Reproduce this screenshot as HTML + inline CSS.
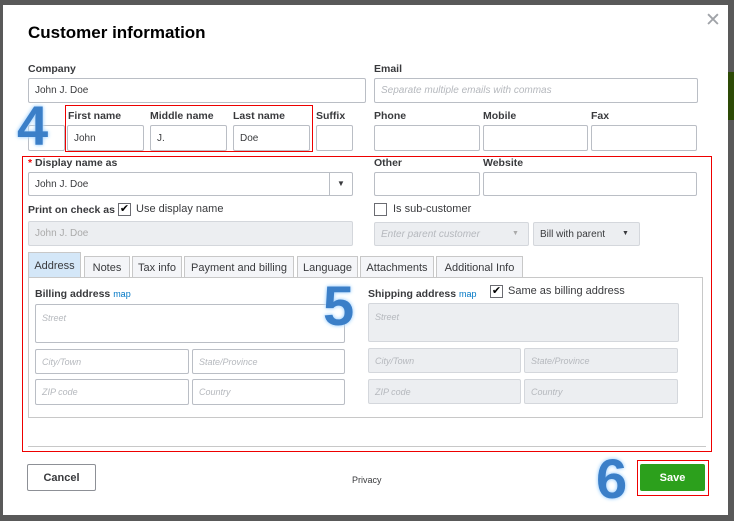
<!DOCTYPE html>
<html><head><meta charset="utf-8"><style>
*{box-sizing:border-box;margin:0;padding:0}
body{width:734px;height:521px;background:#595959;font-family:"Liberation Sans",sans-serif;position:relative;overflow:hidden;color:#393a3d}
.a{position:absolute}
.modal{left:3px;top:5px;width:725px;height:510px;background:#fff}
.lbl{font-size:10.5px;font-weight:bold;color:#393a3d}
.in{border:1px solid #babec5;background:#fff;border-radius:2px;font-size:10px;padding-left:6px;display:flex;align-items:center;color:#393a3d}
.g{background:#eceef1;border-color:#d4d7dc;color:#aaa}
.ph{color:#b5b8bd;font-style:italic}
.red{border:1px solid #e00}
.cb{width:13px;height:13px;border:1px solid #6b6c72;background:#fff;font-size:11px;line-height:11px;text-align:center;color:#000}
.tab{top:256px;height:22px;border:1px solid #c8c8c8;border-bottom:none;background:#f4f5f8;font-size:11px;display:flex;align-items:center;justify-content:center;color:#393a3d}
.big{font-weight:bold;color:#3b7fc8;text-shadow:0 0 3px #a8d4ff,0 0 5px #bfe2ff;font-family:"Liberation Sans",sans-serif;font-size:56px;line-height:1}
.map{color:#0077c5;font-size:9px;font-weight:normal}
</style></head><body>
<div class="a" style="left:728px;top:72px;width:6px;height:48px;background:#2d4a06"></div>
<div class="a modal"></div>
<div class="a" style="left:705px;top:9px;font-size:19px;color:#a0a3a8">✕</div>
<div class="a" style="left:28px;top:23px;font-size:17px;font-weight:bold;color:#000">Customer information</div>

<div class="a lbl" style="left:28px;top:63px">Company</div>
<div class="a in" style="left:28px;top:78px;width:338px;height:25px">John J. Doe</div>
<div class="a lbl" style="left:374px;top:63px">Email</div>
<div class="a in ph" style="left:374px;top:78px;width:324px;height:25px">Separate multiple emails with commas</div>

<div class="a in" style="left:28px;top:125px;width:37px;height:26px"></div>
<div class="a red" style="left:65px;top:105px;width:248px;height:47px"></div>
<div class="a lbl" style="left:68px;top:110px">First name</div>
<div class="a lbl" style="left:150px;top:110px">Middle name</div>
<div class="a lbl" style="left:233px;top:110px">Last name</div>
<div class="a lbl" style="left:316px;top:110px">Suffix</div>
<div class="a in" style="left:67px;top:125px;width:77px;height:26px">John</div>
<div class="a in" style="left:150px;top:125px;width:77px;height:26px">J.</div>
<div class="a in" style="left:233px;top:125px;width:77px;height:26px">Doe</div>
<div class="a in" style="left:316px;top:125px;width:37px;height:26px"></div>
<div class="a lbl" style="left:374px;top:110px">Phone</div>
<div class="a lbl" style="left:483px;top:110px">Mobile</div>
<div class="a lbl" style="left:591px;top:110px">Fax</div>
<div class="a in" style="left:374px;top:125px;width:106px;height:26px"></div>
<div class="a in" style="left:483px;top:125px;width:105px;height:26px"></div>
<div class="a in" style="left:591px;top:125px;width:106px;height:26px"></div>
<div class="a big" style="left:17px;top:98px">4</div>

<div class="a red" style="left:22px;top:156px;width:690px;height:296px"></div>
<div class="a lbl" style="left:28px;top:157px"><span style="color:#e00">*</span> Display name as</div>
<div class="a in" style="left:28px;top:172px;width:325px;height:24px">John J. Doe</div>
<div class="a" style="left:329px;top:173px;width:1px;height:22px;background:#babec5"></div>
<div class="a" style="left:337px;top:179px;font-size:8px">▼</div>
<div class="a lbl" style="left:374px;top:157px">Other</div>
<div class="a lbl" style="left:483px;top:157px">Website</div>
<div class="a in" style="left:374px;top:172px;width:106px;height:24px"></div>
<div class="a in" style="left:483px;top:172px;width:214px;height:24px"></div>
<div class="a lbl" style="left:28px;top:204px">Print on check as</div>
<div class="a cb" style="left:118px;top:203px">✔</div>
<div class="a" style="left:136px;top:203px;font-size:11px">Use display name</div>
<div class="a in g" style="left:28px;top:221px;width:325px;height:25px">John J. Doe</div>
<div class="a cb" style="left:374px;top:203px"></div>
<div class="a" style="left:393px;top:203px;font-size:11px">Is sub-customer</div>
<div class="a in g ph" style="left:374px;top:222px;width:155px;height:24px">Enter parent customer</div>
<div class="a" style="left:512px;top:230px;font-size:7px;color:#aaa">▼</div>
<div class="a in g" style="left:533px;top:222px;width:107px;height:24px;color:#393a3d">Bill with parent</div>
<div class="a" style="left:622px;top:230px;font-size:7px">▼</div>

<div class="a tab" style="left:28px;width:53px;background:#d4e7f8;height:26px;top:252px">Address</div>
<div class="a tab" style="left:84px;width:46px">Notes</div>
<div class="a tab" style="left:132px;width:50px">Tax info</div>
<div class="a tab" style="left:184px;width:110px">Payment and billing</div>
<div class="a tab" style="left:297px;width:61px">Language</div>
<div class="a tab" style="left:360px;width:74px">Attachments</div>
<div class="a tab" style="left:436px;width:87px">Additional Info</div>
<div class="a" style="left:28px;top:277px;width:675px;height:141px;border:1px solid #c8c8c8"></div>
<div class="a lbl" style="left:35px;top:288px">Billing address <span class="map">map</span></div>
<div class="a in ph" style="left:35px;top:304px;width:310px;height:39px;align-items:flex-start;padding-top:8px;font-size:9px">Street</div>
<div class="a in ph" style="left:35px;top:349px;width:154px;height:25px;font-size:9px">City/Town</div>
<div class="a in ph" style="left:192px;top:349px;width:153px;height:25px;font-size:9px">State/Province</div>
<div class="a in ph" style="left:35px;top:379px;width:154px;height:26px;font-size:9px">ZIP code</div>
<div class="a in ph" style="left:192px;top:379px;width:153px;height:26px;font-size:9px">Country</div>
<div class="a lbl" style="left:368px;top:288px">Shipping address <span class="map">map</span></div>
<div class="a cb" style="left:490px;top:285px">✔</div>
<div class="a" style="left:508px;top:285px;font-size:11px">Same as billing address</div>
<div class="a in g ph" style="left:368px;top:303px;width:311px;height:39px;align-items:flex-start;padding-top:8px;font-size:9px">Street</div>
<div class="a in g ph" style="left:368px;top:348px;width:153px;height:25px;font-size:9px">City/Town</div>
<div class="a in g ph" style="left:524px;top:348px;width:154px;height:25px;font-size:9px">State/Province</div>
<div class="a in g ph" style="left:368px;top:379px;width:153px;height:25px;font-size:9px">ZIP code</div>
<div class="a in g ph" style="left:524px;top:379px;width:154px;height:25px;font-size:9px">Country</div>
<div class="a big" style="left:323px;top:278px">5</div>
<div class="a" style="left:28px;top:446px;width:678px;height:1px;background:#c8c8c8"></div>

<div class="a" style="left:27px;top:464px;width:69px;height:27px;border:1px solid #8d9096;border-radius:2px;font-size:11px;font-weight:bold;display:flex;align-items:center;justify-content:center">Cancel</div>
<div class="a" style="left:352px;top:475px;font-size:9px">Privacy</div>
<div class="a big" style="left:596px;top:451px">6</div>
<div class="a red" style="left:637px;top:460px;width:72px;height:36px"></div>
<div class="a" style="left:640px;top:464px;width:65px;height:27px;background:#2ca01c;border-radius:2px;color:#fff;font-size:11px;font-weight:bold;display:flex;align-items:center;justify-content:center">Save</div>
</body></html>
